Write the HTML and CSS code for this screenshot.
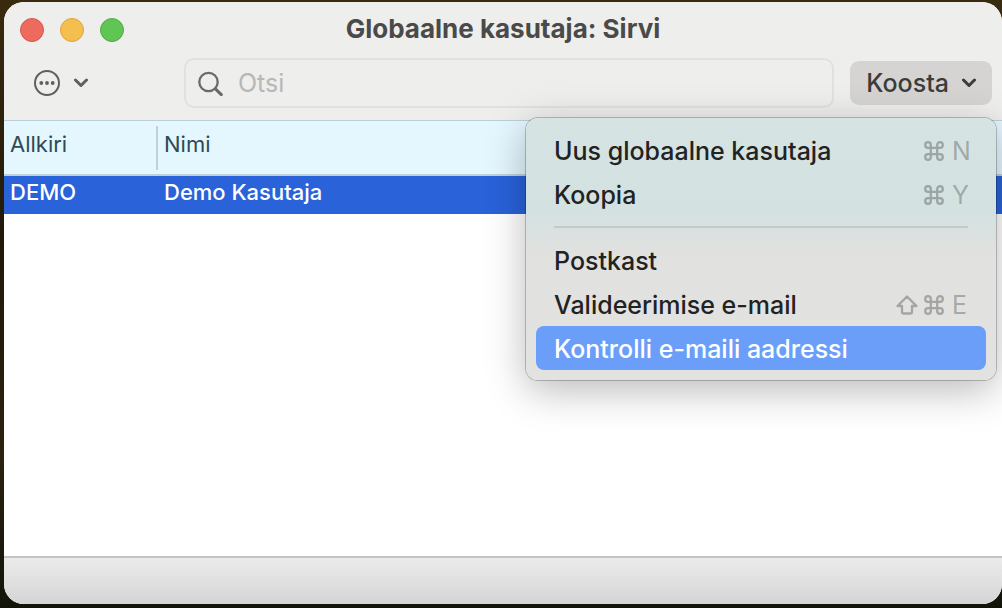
FILE: index.html
```html
<!DOCTYPE html>
<html lang="et">
<head>
    <meta charset="UTF-8">
    <meta name="viewport" content="width=device-width, initial-scale=1.0">
    <title>Globaalne kasutaja: Sirvi</title>
    <link rel="stylesheet" href="styles.css">
</head>
<body>
    <!-- shared shortcut symbols -->
    <svg class="symbols" aria-hidden="true">
        <symbol id="cmd" viewBox="2 2 20 20">
            <path d="M18 3.2a2.8 2.8 0 0 0-2.8 2.8v12a2.8 2.8 0 1 0 2.8-2.8H6a2.8 2.8 0 1 0 2.8 2.8V6a2.8 2.8 0 1 0-2.8 2.8h12a2.8 2.8 0 0 0 0-5.6z"/>
        </symbol>
        <symbol id="shift" viewBox="0 0 22 20">
            <path d="M11 1.5 1.5 11H6v6.2q0 1.3 1.3 1.3h7.4q1.3 0 1.3-1.3V11h4.5z"/>
        </symbol>
    </svg>

    <div class="window">
        <header class="chrome">
            <div class="titlebar">
                <div class="lights">
                    <button type="button" class="light close" aria-label="Sulge"></button>
                    <button type="button" class="light minimize" aria-label="Minimeeri"></button>
                    <button type="button" class="light maximize" aria-label="Suurenda"></button>
                </div>
                <h1>Globaalne kasutaja: Sirvi</h1>
            </div>

            <div class="toolbar">
                <div class="actions">
                    <button type="button" class="more-btn" aria-label="Toimingud">
                        <svg class="more-icon" viewBox="0 0 26 26">
                            <circle cx="13" cy="13" r="12"/>
                            <circle class="dot" cx="7.3" cy="13" r="1.9"/>
                            <circle class="dot" cx="13" cy="13" r="1.9"/>
                            <circle class="dot" cx="18.7" cy="13" r="1.9"/>
                        </svg>
                        <svg class="chevron" viewBox="0 0 14 10"><path d="M1.5 2 7 7.5 12.5 2"/></svg>
                    </button>
                </div>

                <label class="search">
                    <svg class="search-icon" viewBox="0 0 26 26">
                        <circle cx="10.5" cy="12" r="9.2"/>
                        <path class="handle" d="M17.4 18.9 23.3 24.6"/>
                    </svg>
                    <input type="text" placeholder="Otsi" aria-label="Otsi">
                </label>

                <div class="create">
                    <button type="button" class="create-btn" aria-haspopup="true" aria-expanded="true">
                        Koosta
                        <svg class="chevron" viewBox="0 0 14 10"><path d="M1.5 2 7 7.5 12.5 2"/></svg>
                    </button>

                    <div class="menu" role="menu">
                        <button type="button" class="menu-item" role="menuitem">
                            <span class="menu-label">Uus globaalne kasutaja</span>
                            <svg class="key-cmd"><use href="#cmd"/></svg>
                            <span class="key">N</span>
                        </button>
                        <button type="button" class="menu-item" role="menuitem">
                            <span class="menu-label">Koopia</span>
                            <svg class="key-cmd"><use href="#cmd"/></svg>
                            <span class="key">Y</span>
                        </button>
                        <hr>
                        <button type="button" class="menu-item" role="menuitem">
                            <span class="menu-label">Postkast</span>
                        </button>
                        <button type="button" class="menu-item" role="menuitem">
                            <span class="menu-label">Valideerimise e-mail</span>
                            <svg class="key-shift"><use href="#shift"/></svg>
                            <svg class="key-cmd"><use href="#cmd"/></svg>
                            <span class="key">E</span>
                        </button>
                        <button type="button" class="menu-item active" role="menuitem">
                            <span class="menu-label">Kontrolli e-maili aadressi</span>
                        </button>
                    </div>
                </div>
            </div>
        </header>

        <main>
            <table class="users">
                <thead>
                    <tr>
                        <th class="col-sign"><div>Allkiri</div></th>
                        <th>Nimi</th>
                    </tr>
                </thead>
                <tbody>
                    <tr class="selected">
                        <td>DEMO</td>
                        <td>Demo Kasutaja</td>
                    </tr>
                </tbody>
            </table>
        </main>

        <footer class="statusbar"></footer>
    </div>
</body>
</html>
```

FILE: styles.css
```css
* {
    box-sizing: border-box;
}

body {
    margin: 0;
    padding: 2px 0 4px 4px;
    min-height: 100vh;
    display: flex;
    background: linear-gradient(to bottom, #3a2a0e, #20190a 40%, #2b210f 75%, #12140a);
    font-family: Inter, "Liberation Sans", sans-serif;
    color: #222;
}

button {
    border: none;
    padding: 0;
    background: none;
    font: inherit;
    color: inherit;
}

svg {
    fill: none;
    stroke: currentColor;
    stroke-width: 2;
    stroke-linecap: round;
    stroke-linejoin: round;
    flex: none;
}

.symbols {
    position: absolute;
    width: 0;
    height: 0;
}

.window {
    flex: 1;
    display: flex;
    flex-direction: column;
    background: #fff;
    border-radius: 20px;
}

/* title bar and toolbar */
.chrome {
    background: #eeeeec;
    border-bottom: 1px solid #bccfd7;
    border-radius: 20px 20px 0 0;
}

.titlebar {
    display: grid;
    grid-template-columns: 1fr auto 1fr;
    align-items: center;
    height: 56px;
    padding: 0 16px;
}

.lights {
    display: flex;
    gap: 16px;
}

.light {
    width: 24px;
    height: 24px;
    border-radius: 50%;
}

.close {
    background: #ed6a5e;
    border: 1px solid #d8574c;
}

.minimize {
    background: #f5bf4f;
    border: 1px solid #dba43c;
}

.maximize {
    background: #61c554;
    border: 1px solid #50ac43;
}

h1 {
    margin: 0;
    padding-bottom: 2px;
    font-size: 26px;
    line-height: 30px;
    font-weight: 700;
    color: #4a4a49;
}

.toolbar {
    display: flex;
    align-items: center;
    padding: 0 10px 12px 30px;
}

.actions {
    width: 150px;
}

.more-btn {
    display: flex;
    align-items: center;
    gap: 14px;
    color: #5f5f5e;
}

.more-icon {
    width: 26px;
    height: 26px;
}

.dot {
    fill: currentColor;
    stroke: none;
}

.chevron {
    width: 14px;
    height: 10px;
    stroke-width: 3;
}

.search {
    flex: 1;
    display: flex;
    align-items: center;
    gap: 14px;
    height: 50px;
    padding: 0 12px;
    border: 2px solid #e1e1df;
    border-radius: 10px;
    color: #6a6a69;
}

.search-icon {
    width: 26px;
    height: 26px;
    stroke-width: 2.3;
}

.handle {
    stroke-width: 3;
}

.search input {
    flex: 1;
    min-width: 0;
    border: none;
    padding: 0;
    outline: none;
    background: none;
    font: inherit;
    font-size: 25px;
}

.search input::placeholder {
    color: #b7b7b5;
    opacity: 1;
}

.create {
    position: relative;
    margin-left: 16px;
}

.create-btn {
    display: flex;
    align-items: center;
    gap: 13px;
    height: 44px;
    padding: 0 16px;
    border-radius: 9px;
    background: #d5d4d2;
    font-size: 25px;
    font-weight: 500;
    color: #3c3c3b;
}

/* drop-down menu */
.menu {
    position: absolute;
    top: calc(100% + 13px);
    right: -4px;
    width: 470px;
    padding: 10px;
    border-radius: 12px;
    background: linear-gradient(to bottom, #d5e3e2, #d3e1e1 35%, #e1e1df 52%, #e2e2e0);
    box-shadow: 0 0 0 1px rgba(0, 0, 0, 0.22), 0 10px 40px rgba(0, 0, 0, 0.28);
    z-index: 1;
}

.menu-item {
    display: flex;
    align-items: center;
    width: 100%;
    height: 44px;
    padding: 2px 14px 0 18px;
    border-radius: 8px;
    font-size: 25px;
    text-align: left;
}

.menu-label {
    flex: 1;
    font-weight: 500;
}

.menu-item.active {
    background: #6a9ef8;
    color: #fff;
}

.menu hr {
    height: 2px;
    margin: 10px 18px;
    border: none;
    background: #c2c9c8;
}

.key-cmd,
.key-shift,
.key {
    color: rgba(0, 0, 0, 0.27);
}

.key-cmd {
    width: 20px;
    height: 20px;
    margin-right: 8px;
    stroke-width: 2.3;
}

.key-shift {
    width: 22px;
    height: 20px;
    margin-right: 6px;
    stroke-width: 2.3;
}

.key {
    width: 20px;
}

/* list */
main {
    flex: 1;
}

.users {
    width: 100%;
    border-spacing: 0;
    text-align: left;
    font-size: 22px;
    line-height: 28px;
}

.users th {
    height: 55px;
    padding: 9px 6px 0;
    vertical-align: top;
    border-bottom: 2px solid #c1d1d7;
    background: #e4f6fe;
    font-weight: 400;
    color: #2f4a52;
}

.users .col-sign {
    width: 154px;
    padding: 5px 0 0;
}

.col-sign div {
    height: 44px;
    padding: 4px 0 0 6px;
    border-right: 2px solid #c1d1d7;
}

.users td {
    height: 38px;
    padding: 0 6px 7px;
    font-weight: 500;
}

.selected {
    background: #2962d9;
    color: #fff;
}

.statusbar {
    height: 48px;
    border-top: 2px solid #c4c4c4;
    border-radius: 0 0 20px 20px;
    background: linear-gradient(to bottom, #ebebeb, #d5d5d5);
}
```
